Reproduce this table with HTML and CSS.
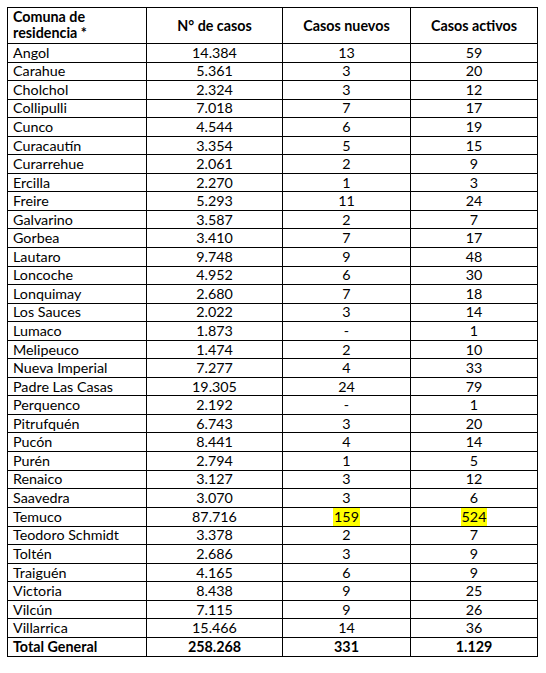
FILE: index.html
```html
<!DOCTYPE html>
<html lang="es">
<head>
<meta charset="utf-8">
<link rel="stylesheet" href="styles.css">
</head>
<body>
<table class="t">
<colgroup><col class="c1"><col class="c2"><col class="c3"><col class="c4"></colgroup>
<thead>
<tr class="hd"><th class="name">Comuna de<br>residencia *</th><th>N° de casos</th><th>Casos nuevos</th><th>Casos activos</th></tr>
</thead>
<tbody>
<tr><td>Angol</td><td>14.384</td><td>13</td><td>59</td></tr>
<tr><td>Carahue</td><td>5.361</td><td>3</td><td>20</td></tr>
<tr><td>Cholchol</td><td>2.324</td><td>3</td><td>12</td></tr>
<tr><td>Collipulli</td><td>7.018</td><td>7</td><td>17</td></tr>
<tr><td>Cunco</td><td>4.544</td><td>6</td><td>19</td></tr>
<tr><td>Curacautín</td><td>3.354</td><td>5</td><td>15</td></tr>
<tr><td>Curarrehue</td><td>2.061</td><td>2</td><td>9</td></tr>
<tr><td>Ercilla</td><td>2.270</td><td>1</td><td>3</td></tr>
<tr><td>Freire</td><td>5.293</td><td>11</td><td>24</td></tr>
<tr><td>Galvarino</td><td>3.587</td><td>2</td><td>7</td></tr>
<tr><td>Gorbea</td><td>3.410</td><td>7</td><td>17</td></tr>
<tr><td>Lautaro</td><td>9.748</td><td>9</td><td>48</td></tr>
<tr><td>Loncoche</td><td>4.952</td><td>6</td><td>30</td></tr>
<tr><td>Lonquimay</td><td>2.680</td><td>7</td><td>18</td></tr>
<tr><td>Los Sauces</td><td>2.022</td><td>3</td><td>14</td></tr>
<tr><td>Lumaco</td><td>1.873</td><td>-</td><td>1</td></tr>
<tr><td>Melipeuco</td><td>1.474</td><td>2</td><td>10</td></tr>
<tr><td>Nueva Imperial</td><td>7.277</td><td>4</td><td>33</td></tr>
<tr><td>Padre Las Casas</td><td>19.305</td><td>24</td><td>79</td></tr>
<tr><td>Perquenco</td><td>2.192</td><td>-</td><td>1</td></tr>
<tr><td>Pitrufquén</td><td>6.743</td><td>3</td><td>20</td></tr>
<tr><td>Pucón</td><td>8.441</td><td>4</td><td>14</td></tr>
<tr><td>Purén</td><td>2.794</td><td>1</td><td>5</td></tr>
<tr><td>Renaico</td><td>3.127</td><td>3</td><td>12</td></tr>
<tr><td>Saavedra</td><td>3.070</td><td>3</td><td>6</td></tr>
<tr><td>Temuco</td><td>87.716</td><td><span class="hl">159</span></td><td><span class="hl">524</span></td></tr>
<tr><td>Teodoro Schmidt</td><td>3.378</td><td>2</td><td>7</td></tr>
<tr><td>Toltén</td><td>2.686</td><td>3</td><td>9</td></tr>
<tr><td>Traiguén</td><td>4.165</td><td>6</td><td>9</td></tr>
<tr><td>Victoria</td><td>8.438</td><td>9</td><td>25</td></tr>
<tr><td>Vilcún</td><td>7.115</td><td>9</td><td>26</td></tr>
<tr><td>Villarrica</td><td>15.466</td><td>14</td><td>36</td></tr>
<tr class="total"><td>Total General</td><td>258.268</td><td>331</td><td>1.129</td></tr>
</tbody>
</table>
</body>
</html>
```
FILE: styles.css
```css
html, body {
  margin: 0;
  padding: 0;
  background: #ffffff;
}
body {
  padding: 7px 0 0 7px;
  font-family: Lato, "Liberation Sans", sans-serif;
  font-size: 14.3px;
  color: #000000;
}
.t {
  border-collapse: collapse;
  table-layout: fixed;
  width: 530px;
}
.c1 { width: 139px; }
.c2 { width: 136px; }
.c3 { width: 128px; }
.c4 { width: 127px; }
.t th, .t td {
  border: 1.3px solid #000000;
  padding: 0 5px;
  text-align: center;
  line-height: 16px;
  height: 17.55px;
  white-space: nowrap;
  overflow: hidden;
}
.t th {
  font-weight: bold;
  height: 34px;
  vertical-align: middle;
}
.t th.name {
  text-align: left;
  vertical-align: top;
  padding-top: 1px;
}
.t td:first-child {
  text-align: left;
}
.total td {
  font-weight: bold;
}
.hl {
  background: #ffff00;
  display: inline-block;
  padding: 1px 1px;
}
```
